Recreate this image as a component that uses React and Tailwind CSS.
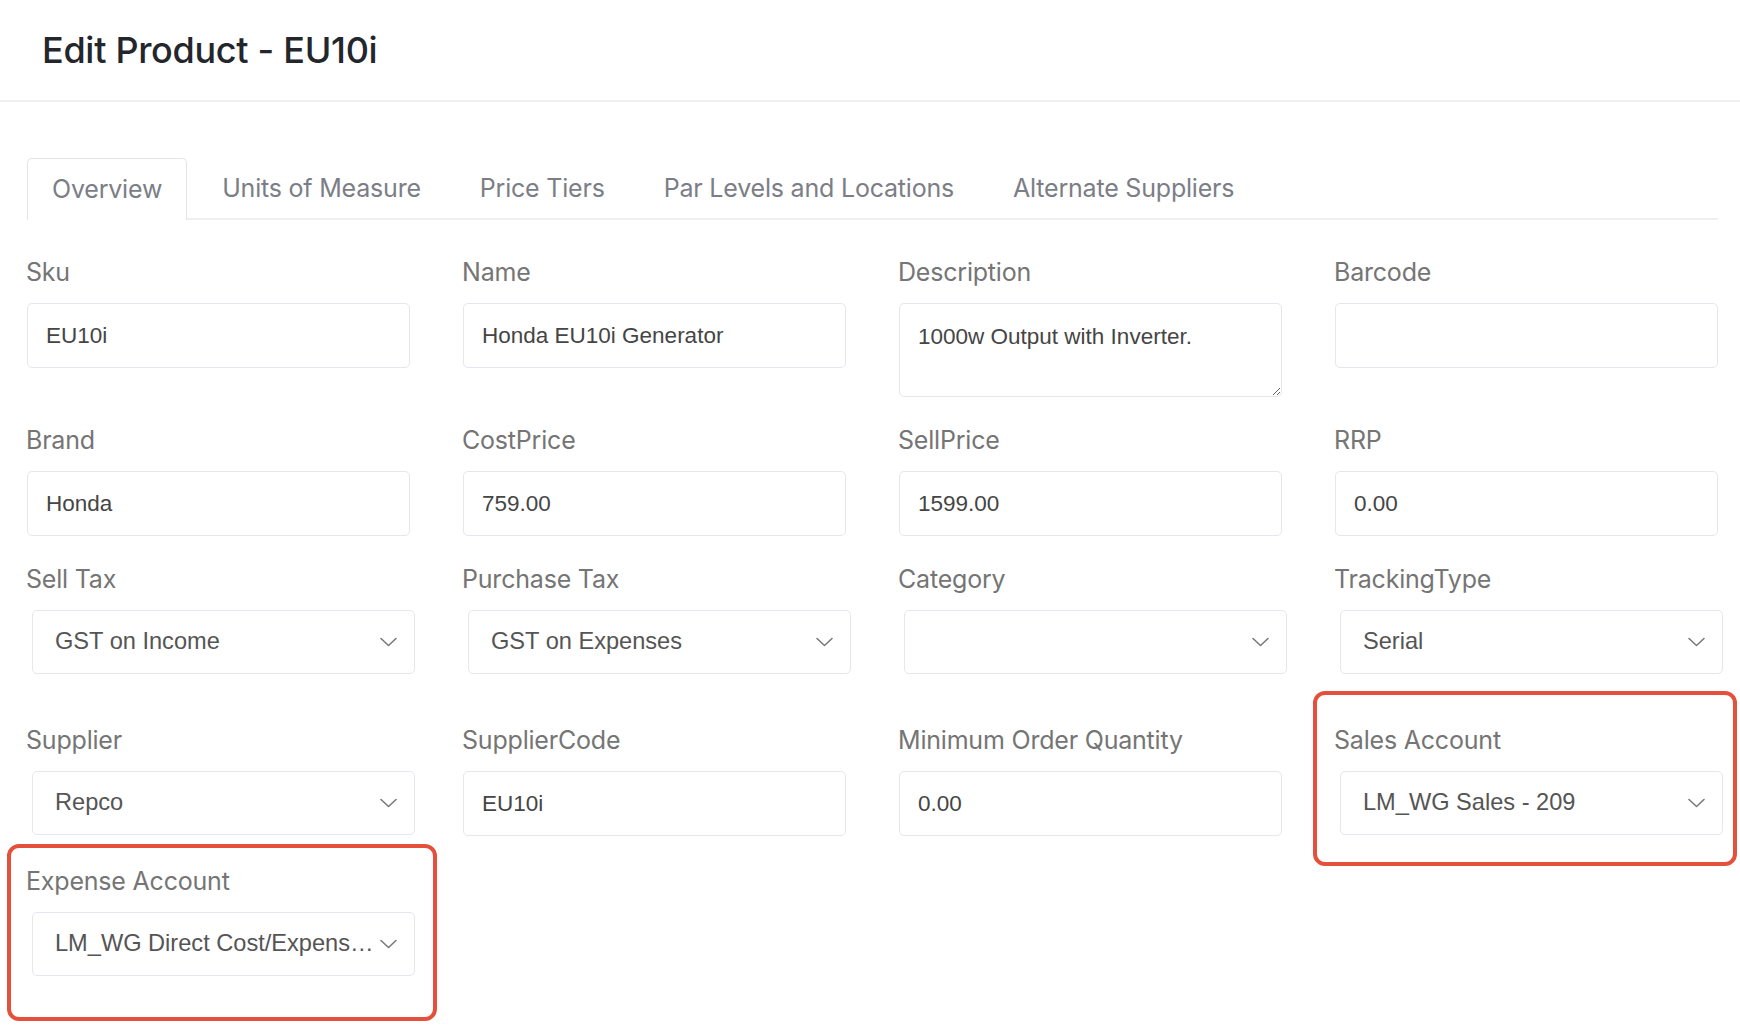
const tabs = ['Overview', 'Units of Measure', 'Price Tiers', 'Par Levels and Locations', 'Alternate Suppliers']

function Chevron() {
  return (
    <svg width="17" height="10" viewBox="0 0 17 10" fill="none" className="shrink-0">
      <path d="M1 1.5 L8.5 8.5 L16 1.5" stroke="#7a7a7a" strokeWidth="1.6" strokeLinecap="round" strokeLinejoin="round" />
    </svg>
  )
}

function Label({ children }) {
  return <div className="h-[30px] leading-[30px] mb-[16px] -ml-[1px] text-[25px] text-[#757575] font-['Inter',sans-serif] tracking-[-0.2px]">{children}</div>
}

function TextField({ label, value, tall }) {
  return (
    <div>
      <Label>{label}</Label>
      {tall ? (
        <textarea
          defaultValue={value}
          className="block w-full h-[94px] border border-[#e6e7ee] rounded-[5px] px-[18px] pt-[16px] text-[22.5px] text-[#454545] font-['Liberation_Sans',Arial,sans-serif] outline-none"
        />
      ) : (
        <input
          defaultValue={value}
          className="block w-full h-[65px] border border-[#e6e7ee] rounded-[5px] px-[18px] text-[22.5px] text-[#454545] font-['Liberation_Sans',Arial,sans-serif] outline-none"
        />
      )}
    </div>
  )
}

function SelectField({ label, value }) {
  return (
    <div>
      <Label>{label}</Label>
      <div className="ml-[5px] w-full h-[64px] border border-[#e6e7ee] rounded-[5px] pl-[22px] pr-[17px] flex items-center">
        <span className="flex-1 min-w-0 truncate mr-[1px] text-[23.6px] text-[#555] font-['Liberation_Sans',Arial,sans-serif]">{value}</span>
        <Chevron />
      </div>
    </div>
  )
}

export default function App() {
  return (
    <div className="relative min-h-[1026px] bg-white">
      {/* Header */}
      <header className="h-[102px] border-b-2 border-[#eeeff3] flex items-center px-[42px]">
        <h1 className="text-[36px] text-[#23262b] font-['Inter',sans-serif] font-medium tracking-[-0.3px]">Edit Product - EU10i</h1>
      </header>

      {/* Tabs */}
      <nav className="mt-[56px] ml-[27px] mr-[22px] border-b-2 border-[#eeeff3] flex gap-[11px]">
        {tabs.map((t, i) => (
          <div
            key={t}
            className={`h-[62px] -mb-[2px] px-[24px] flex items-center text-[25px] text-[#7b7e86] font-['Inter',sans-serif] tracking-[-0.2px] ${
              i === 0 ? 'border border-b-0 border-[#e3e4ea] rounded-t-[5px] bg-white' : ''
            }`}
          >
            {t}
          </div>
        ))}
      </nav>

      {/* Form */}
      <main className="pl-[27px] pr-[22px] pt-[37px]">
        <div className="grid grid-cols-4 gap-x-[53px] items-start">
          <TextField label="Sku" value="EU10i" />
          <TextField label="Name" value="Honda EU10i Generator" />
          <TextField label="Description" value="1000w Output with Inverter." tall />
          <TextField label="Barcode" value="" />
        </div>

        <div className="grid grid-cols-4 gap-x-[53px] mt-[28px]">
          <TextField label="Brand" value="Honda" />
          <TextField label="CostPrice" value="759.00" />
          <TextField label="SellPrice" value="1599.00" />
          <TextField label="RRP" value="0.00" />
        </div>

        <div className="grid grid-cols-4 gap-x-[53px] mt-[28px]">
          <SelectField label="Sell Tax" value="GST on Income" />
          <SelectField label="Purchase Tax" value="GST on Expenses" />
          <SelectField label="Category" value="" />
          <SelectField label="TrackingType" value="Serial" />
        </div>

        <div className="grid grid-cols-4 gap-x-[53px] mt-[51px]">
          <SelectField label="Supplier" value="Repco" />
          <TextField label="SupplierCode" value="EU10i" />
          <TextField label="Minimum Order Quantity" value="0.00" />
          <SelectField label="Sales Account" value="LM_WG Sales - 209" />
        </div>

        <div className="grid grid-cols-4 gap-x-[53px] mt-[30px]">
          <SelectField label="Expense Account" value="LM_WG Direct Cost/Expense - 310" />
        </div>
      </main>

      {/* Annotation highlights */}
      <div className="absolute left-[1313px] top-[691px] w-[424px] h-[175px] border-[4px] border-[#e4503b] rounded-[12px] pointer-events-none" />
      <div className="absolute left-[7px] top-[844px] w-[430px] h-[177px] border-[4px] border-[#e4503b] rounded-[12px] pointer-events-none" />
    </div>
  )
}
